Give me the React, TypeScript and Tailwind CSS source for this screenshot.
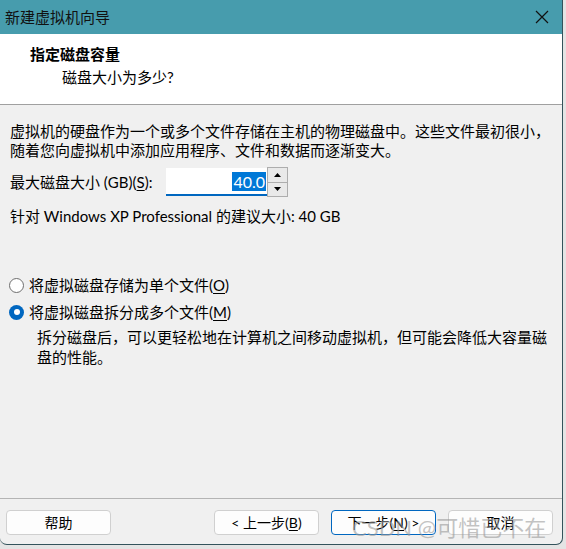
import React from "react";

const font = {
  fontFamily: '"Segoe UI", Lato, "Noto Sans CJK SC", sans-serif',
};

function Radio({ checked, label, hotkey }: { checked?: boolean; label: string; hotkey: string }) {
  return (
    <div className="flex h-[20px] items-center">
      <span
        className={`ml-[9px] flex h-[15px] w-[15px] items-center justify-center rounded-full ${
          checked ? "bg-[#0067c0]" : "border border-[#6e6e6e] bg-white"
        }`}
      >
        {checked && <span className="h-[6px] w-[6px] rounded-full bg-white" />}
      </span>
      <span className="ml-[5px]">
        {label}(<u className="underline-offset-2">{hotkey}</u>)
      </span>
    </div>
  );
}

function Btn({ children, primary }: { children: React.ReactNode; primary?: boolean }) {
  return (
    <button
      type="button"
      className={`flex h-[25px] w-[105px] items-center justify-center rounded-[4px] border bg-[#fdfdfd] text-[14px] text-black ${
        primary ? "border-[#0067c0]" : "border-[#d0d0d0]"
      }`}
    >
      {children}
    </button>
  );
}

export default function App() {
  return (
    <div className="relative h-[549px] w-[566px] overflow-hidden bg-[#e4e4e4]" style={font}>
      <div className="flex h-[545px] w-[563px] flex-col overflow-hidden rounded-b-[7px] border-r border-b border-[#33535b] bg-[#f0f0f0] text-[15px] text-black">
        {/* title bar */}
        <div className="flex h-[34px] shrink-0 items-center justify-between bg-[#479cad] pl-[5px] pr-[13px]">
          <span className="text-[15px] text-[#111]">新建虚拟机向导</span>
          <svg width="14" height="14" viewBox="0 0 14 14" fill="none" stroke="#111" strokeWidth="1.2">
            <path d="M1 1l12 12M13 1L1 13" />
          </svg>
        </div>

        {/* header */}
        <div className="h-[71px] shrink-0 border-b border-[#a0a0a0] bg-white pt-[10px]">
          <div className="pl-[30px] text-[15px] leading-[20px] font-bold">指定磁盘容量</div>
          <div className="mt-[3px] pl-[62px] leading-[20px]">磁盘大小为多少?</div>
        </div>

        {/* body */}
        <div className="flex flex-1 flex-col pt-[17px]">
          <div className="pl-[10px] leading-[19px]">
            <div>虚拟机的硬盘作为一个或多个文件存储在主机的物理磁盘中。这些文件最初很小，</div>
            <div>随着您向虚拟机中添加应用程序、文件和数据而逐渐变大。</div>
          </div>

          <div className="mt-[7px] flex h-[30px] items-center pl-[10px]">
            <span className="w-[156px]">
              最大磁盘大小 (GB)(<u className="underline-offset-2">S</u>):
            </span>
            <div className="flex h-[28px] w-[101px] items-center justify-end border-b-2 border-[#0067c0] bg-white pr-[1px]">
              <span className="bg-[#0078d7] px-[1px] text-[16px] leading-[19px] text-white">40.0</span>
            </div>
            <div className="flex h-[30px] w-[21px] flex-col border border-[#adadad] bg-[#e9e9e9]">
              <div className="flex flex-1 items-center justify-center border-b border-[#adadad]">
                <svg width="7" height="4" viewBox="0 0 7 4">
                  <path d="M0 4L3.5 0L7 4z" fill="#000" />
                </svg>
              </div>
              <div className="flex flex-1 items-center justify-center">
                <svg width="7" height="4" viewBox="0 0 7 4">
                  <path d="M0 0L3.5 4L7 0z" fill="#000" />
                </svg>
              </div>
            </div>
          </div>

          <div className="mt-[9px] pl-[10px] leading-[20px]">
            针对 Windows XP Professional 的建议大小: 40 GB
          </div>

          <div className="mt-[49px] flex flex-col gap-[7px]">
            <Radio label="将虚拟磁盘存储为单个文件" hotkey="O" />
            <Radio checked label="将虚拟磁盘拆分成多个文件" hotkey="M" />
          </div>

          <div className="mt-[5px] pl-[37px] pr-[12px] leading-[20px]">
            拆分磁盘后，可以更轻松地在计算机之间移动虚拟机，但可能会降低大容量磁盘的性能。
          </div>

          <div className="mt-auto border-t border-[#b4b4b4]" />
          <div className="flex items-center justify-between pt-[11px] pb-[9px] pl-[6px] pr-[9px]">
            <Btn>帮助</Btn>
            <div className="flex gap-[12px]">
              <Btn>
                &lt; 上一步(<u className="underline-offset-2">B</u>)
              </Btn>
              <Btn primary>
                下一步(<u className="underline-offset-2">N</u>) &gt;
              </Btn>
              <Btn>取消</Btn>
            </div>
          </div>
        </div>
      </div>

      {/* watermark */}
      <div className="pointer-events-none absolute left-[352px] top-[514px] text-[22px] leading-[28px] text-[#9a9a9a]/60">
        CSDN @可惜已不在
      </div>
    </div>
  );
}
